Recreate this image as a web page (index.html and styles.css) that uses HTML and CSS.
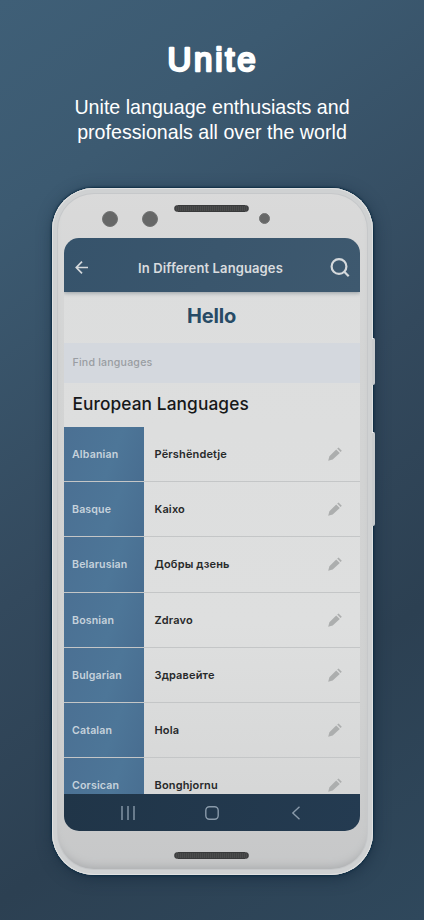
FILE: index.html
```html
<!DOCTYPE html>
<html lang="en">
<head>
<meta charset="utf-8">
<title>Unite</title>
<link rel="stylesheet" href="styles.css">
</head>
<body>
<svg width="0" height="0" class="defs" aria-hidden="true">
  <symbol id="pencil" viewBox="0 0 14 14">
    <path d="M.2 13.8 1.4 9.3 8.2 2.4 11.8 6 4.7 12.6ZM9.2 1.6 10.5.4 13.8 3.8 12.6 5Z"/>
  </symbol>
</svg>
<main class="promo">
  <h1 class="title"><svg width="100" height="36" viewBox="0 0 100 36"><text x="5.4" y="28.8">Unite</text></svg></h1>
  <p class="tagline"><span>Unite language enthusiasts and</span><span>professionals all over the world</span></p>
  <section class="phone">
    <i class="key power"></i><i class="key volume"></i>
    <div class="top">
      <i class="dot d1"></i><i class="dot d2"></i><i class="speaker"></i><i class="dot small"></i>
    </div>
    <div class="screen">
      <header class="bar">
        <svg class="back" width="14" height="14" viewBox="0 0 14 14"><path d="M13 6.5H1.5M7 .7 1.3 6.5 7 12.3"/></svg>
        <h2>In Different Languages</h2>
        <svg class="search" width="20" height="20" viewBox="0 0 20 20"><circle cx="9" cy="8.5" r="7.4"/><path d="m14.3 13.8 4.4 4.4"/></svg>
      </header>
      <div class="word">Hello</div>
      <div class="find">Find languages</div>
      <h3>European Languages</h3>
      <div class="list">
        <div class="row"><b>Albanian</b><span>Përshëndetje</span><svg><use href="#pencil"/></svg></div>
        <div class="row"><b>Basque</b><span>Kaixo</span><svg><use href="#pencil"/></svg></div>
        <div class="row tall"><b>Belarusian</b><span>Добры дзень</span><svg><use href="#pencil"/></svg></div>
        <div class="row"><b>Bosnian</b><span>Zdravo</span><svg><use href="#pencil"/></svg></div>
        <div class="row"><b>Bulgarian</b><span>Здравейте</span><svg><use href="#pencil"/></svg></div>
        <div class="row"><b>Catalan</b><span>Hola</span><svg><use href="#pencil"/></svg></div>
        <div class="row"><b>Corsican</b><span>Bonghjornu</span><svg><use href="#pencil"/></svg></div>
      </div>
      <nav>
        <svg width="14" height="14" viewBox="0 0 14 14"><path d="M1 0v14M7 0v14M13 0v14"/></svg>
        <svg width="14" height="14" viewBox="0 0 14 14"><rect x=".8" y=".8" width="12.4" height="12.4" rx="3.6"/></svg>
        <svg width="14" height="14" viewBox="0 0 14 14"><path d="M10.5.8 3.8 7l6.7 6.2"/></svg>
      </nav>
    </div>
    <i class="speaker bottom"></i>
  </section>
</main>
</body>
</html>
```
FILE: styles.css
```css
* { box-sizing: border-box; }
body { margin: 0; font-family: Inter, "Liberation Sans", sans-serif; }
.defs { position: absolute; }
.promo {
  width: 424px; height: 920px; overflow: hidden;
  display: flex; flex-direction: column; align-items: center;
  background: linear-gradient(145deg, #3f5f77 0%, #3c5a71 18%, #33495d 50%, #2c4052 74%, #2f485c 100%);
}
.title { margin: 42px 0 0; height: 36px; line-height: 0; }
.title text {
  font: 400 33px "Liberation Sans", Arial, sans-serif; letter-spacing: 2.8px;
  fill: #fff; stroke: #fff; stroke-width: 2.5px; stroke-linejoin: round;
}
.tagline {
  margin: 17px 0 0; display: flex; flex-direction: column; align-items: center;
  font: 19.65px/25px "Liberation Sans", Arial, sans-serif; color: #fff;
}
.phone {
  position: relative; margin-top: 43px; width: 321px; height: 687px;
  border-radius: 42px; padding: 0 12px;
  background: linear-gradient(180deg, #dadada 0%, #d3d4d4 25%, #d0d1d1 75%, #c6c7c8 100%);
  box-shadow: inset 0 0 0 1px #e0e1e1, inset 0 0 0 5px #cfd1d2, inset 0 0 0 6px #c6c8ca, inset 0 -8px 8px #aaacae, 0 0 2px 1px #0c2c43, 1px 3px 15px #13273a99;
}
.key { position: absolute; right: -2px; width: 3px; border-radius: 0 2px 2px 0; background: #c8cbcd; border-top: 1px solid #eee; }
.power { top: 150px; height: 47px; }
.volume { top: 244px; height: 94px; }
.top { height: 50px; display: flex; align-items: flex-start; padding-left: 38px; }
.dot { width: 16px; height: 16px; border-radius: 50%; background: #666767; border: 1px solid #737474; margin-top: 23px; }
.d2 { margin-left: 24px; }
.small { width: 11px; height: 11px; margin: 25px 0 0 10px; }
.speaker {
  display: block; width: 75px; height: 7px; margin: 17px 0 0 16px; border-radius: 4px;
  background: repeating-linear-gradient(90deg, #404142 0 1px, #4b4c4c 1px 2px); border: 1px solid #393a3b;
}
.speaker.bottom { margin: 21px auto 0; transform: translateX(-1px); }
.screen {
  width: 296px; height: 593px; border-radius: 15px; overflow: hidden;
  display: flex; flex-direction: column; background: linear-gradient(#dcdddd, #dedfdf 65%, #d4d5d5);
}
.bar {
  flex: 0 0 54px; padding: 5px 10px 0 11px; display: flex; align-items: center; justify-content: space-between;
  background: linear-gradient(110deg, #36536b, #3e596f); color: #d9dcdf;
  box-shadow: 0 1px 4px #36465370; z-index: 1;
}
.bar h2 { margin: 0 0 0 3px; font-size: 13px; font-weight: 600; letter-spacing: .12px; }
.bar svg, nav svg { fill: none; stroke: #d5d9dc; stroke-width: 1.7; }
.bar .search { stroke-width: 2.2; }
.word { flex: 0 0 51px; text-align: center; line-height: 49px; font-size: 20px; font-weight: 700; letter-spacing: -.2px; color: #274b66; }
.find {
  flex: 0 0 40px; padding-left: 9px; line-height: 39px; background: #d4d8de;
  color: #999da2; font-size: 10.6px; font-weight: 500; letter-spacing: .2px;
}
h3 { margin: 0; flex: 0 0 44px; padding-left: 9px; line-height: 41px; font-size: 17.3px; font-weight: 500; color: #161819; letter-spacing: .1px; white-space: nowrap; }
.list { flex: 0 0 367px; overflow: hidden; }
.row { display: flex; align-items: stretch; height: 55px; line-height: 55px; font-size: 11px; font-weight: 600; letter-spacing: .15px; color: #27292a; border-bottom: 1px solid #c4c6c7; }
.row.tall { height: 56px; }
.row b { width: 80px; padding-left: 8.5px; font-size: 10.6px; font-weight: 600; color: #c6d2dc; background: linear-gradient(110deg, #4b7093, #4d7698 60%, #486d90); }
.row span { flex: 1; padding-left: 11px; }
.row svg { width: 14px; height: 14px; margin: 20px 17.5px 0 0; fill: #acaeae; }
nav { flex: 1; display: flex; justify-content: space-between; align-items: center; padding: 1px 57px; background: linear-gradient(100deg, #203548, #243b51); }
nav svg { stroke: #899aaa; stroke-width: 1.4; }
```
